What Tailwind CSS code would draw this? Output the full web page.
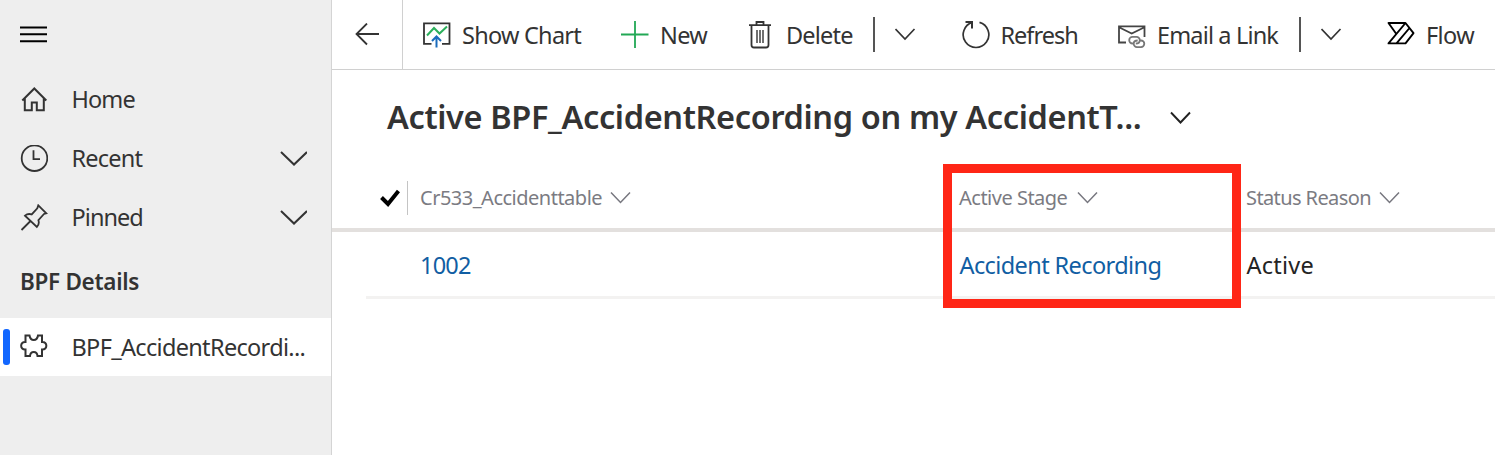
<!DOCTYPE html>
<html lang="en">
<head>
<meta charset="utf-8">
<title>Active BPF_AccidentRecording</title>
<script src="https://cdn.jsdelivr.net/npm/@tailwindcss/browser@4"></script>
</head>
<body class="h-[455px] w-[1495px] overflow-hidden bg-white font-['Noto_Sans',sans-serif] text-[23.5px] text-[#333]">
<div class="flex h-full whitespace-nowrap">

  <!-- Site map -->
  <nav class="flex w-[332px] shrink-0 flex-col border-r border-[#d4d4d4] bg-[#eee]">
    <div class="flex h-[70px] shrink-0 items-center pl-5">
      <svg class="h-[18px] w-7" viewBox="0 0 28 18" stroke="#000" stroke-width="2"><path d="M0 1.500h27M0 8.300h27M0 15.200h27"/></svg>
    </div>
    <div class="flex h-[59px] shrink-0 items-center pl-5">
      <svg class="w-[28px] h-[28px]" viewBox="0 0 28 28" fill="none" stroke="#333" stroke-width="2"><path d="M2.300 14.500 14.300 2.500l12 12M4.800 12.500v11.700h7V16.500h5v7.700h7V12.500"/></svg>
      <span class="ml-[23.500px] tracking-[-0.900px]">Home</span>
    </div>
    <div class="flex h-[59px] shrink-0 items-center pl-5">
      <svg class="w-[28px] h-[28px]" viewBox="0 0 28 28" fill="none" stroke="#333" stroke-width="1.800"><circle cx="14.500" cy="13.200" r="12.800"/><path d="M13.500 5.200v9h6.500"/></svg>
      <span class="ml-[23.500px] w-[207.500px] tracking-[-0.800px]">Recent</span>
      <svg class="h-[15px] w-[28px]" viewBox="0 0 28 15" fill="none" stroke="#333" stroke-width="2"><path d="m2 1 13 12.500 13-12.500"/></svg>
    </div>
    <div class="flex h-[59px] shrink-0 items-center pl-5">
      <svg class="w-[28px] h-[28px]" viewBox="0 0 28 28" fill="none" stroke="#333" stroke-width="1.800"><path d="M1.500 26 10.500 17M18.300 1.300l8 8-2.300.7-5.600 6.200c.8 2.300.3 4.900-1.500 6.700L5 11.700c2-1.800 4.500-2 6.700-1.300l5.600-6z"/></svg>
      <span class="ml-[23.500px] w-[207.500px] tracking-[-0.950px]">Pinned</span>
      <svg class="h-[15px] w-[28px]" viewBox="0 0 28 15" fill="none" stroke="#333" stroke-width="2"><path d="m2 1 13 12.500 13-12.500"/></svg>
    </div>
    <div class="flex h-[70.500px] shrink-0 items-center pl-5 text-[22.500px] font-semibold tracking-[-0.300px]">BPF Details</div>
    <div class="flex h-[58.500px] shrink-0 items-center bg-white pl-[3px]">
      <span class="h-[36px] w-[7px] rounded-[3px] bg-[#1267ff]"></span>
      <svg class="ml-[9px] h-[28px] w-[30px]" viewBox="0 0 30 28" fill="none" stroke="#333" stroke-width="2"><path d="M6.500 2.500H10.500C11.500 8.500 18 8.500 19 2.500H23V9C28.800 8.500 28.800 17 23 16.500V23H18.500C18 17.500 11.500 17.500 11 23H6.500V16.500C.700 17 .700 8.500 6.500 9z"/></svg>
      <span class="ml-[22.500px] mt-[2px] tracking-[-0.670px]">BPF_AccidentRecordi...</span>
    </div>
  </nav>

  <main class="flex grow flex-col">
    <!-- Command bar -->
    <header class="flex h-[70px] shrink-0 items-center border-b border-[#d0d0d0]">
      <div class="flex h-full w-[71px] shrink-0 items-center border-r border-[#d0d0d0] pl-[23px]">
        <svg class="h-[24px] w-[26px]" viewBox="0 0 26 24" fill="none" stroke="#333" stroke-width="1.800"><path d="M24 11H1.500M12 .500 1.500 11 12 21.500"/></svg>
      </div>
      <svg class="ml-5 h-[28px] w-[28px] shrink-0" viewBox="0 0 28 28" fill="none" stroke-width="1.800"><path stroke="#333" d="M8.500 22.900H1V2.300h25.500v20.600h-7.500"/><path stroke="#2bb05c" stroke-width="2" d="m4 14.500 7-7.500 5.500 5.500L24 5.500"/><path stroke="#1a6cbd" stroke-width="2" d="M13.500 26.500V16M9 20l4.500-4.500L18 20"/></svg>
      <span class="ml-[11px] mt-[2px] w-[159px] shrink-0 tracking-[-0.750px]">Show Chart</span>
      <svg class="h-[28px] w-[28px] shrink-0" viewBox="0 0 28 28" stroke="#22a855" stroke-width="1.800"><path d="M0 13.500h27.500M14 0v27"/></svg>
      <span class="ml-[11px] mt-[2px] w-[89px] shrink-0 tracking-[-0.700px]">New</span>
      <svg class="h-[28px] w-[23px] shrink-0" viewBox="0 0 23 28" fill="none" stroke="#333" stroke-width="1.800"><path d="M0 4.200h22M7.500 4V1h7v3M2.500 4.500v19.500q0 2.500 2.500 2.500h12q2.500 0 2.500-2.500V4.500"/><path stroke-width="1.400" d="M8 9v13M11 9v13M14 9v13"/></svg>
      <span class="ml-[14px] mt-[2px] w-[87px] shrink-0 tracking-[-0.800px]">Delete</span>
      <span class="h-[35px] w-[1.500px] shrink-0 bg-[#555]"></span>
      <svg class="ml-[20px] h-[14px] w-[22px] shrink-0" viewBox="0 0 22 14" fill="none" stroke="#333" stroke-width="1.700"><path d="m.5 1 9.500 10 9.500-10"/></svg>
      <svg class="ml-[45.500px] h-[28px] w-[28px] shrink-0" viewBox="0 0 28 28" fill="none" stroke="#333" stroke-width="1.700"><path d="M17.500 1.400A12.800 12.800 0 1 1 10.500 1.400"/><path stroke-width="2" d="M3.500 1h6.500v6.500"/></svg>
      <span class="ml-[10.500px] mt-[2px] w-[117.500px] shrink-0 tracking-[-1px]">Refresh</span>
      <svg class="h-[28px] w-[29px] shrink-0" viewBox="0 0 29 28" fill="none" stroke="#444" stroke-width="1.800"><path d="M8 21.500H1V5.300h25.500V16M1.500 6.500 13.700 12.500l12.300-6"/><path stroke="#777" d="M15 22.500h-.500a3.300 3.300 0 0 1 0-6.600h4a3.300 3.300 0 0 1 3.300 3.300q0 3.300-4 3.300M22.500 19.500h.5a3.300 3.300 0 0 1 0 6.600h-4a3.300 3.300 0 0 1-3.300-3.300q0-3.300 4-3.300"/></svg>
      <span class="ml-[10px] mt-[2px] w-[142px] shrink-0 tracking-[-0.850px]">Email a Link</span>
      <span class="h-[35px] w-[1.500px] shrink-0 bg-[#555]"></span>
      <svg class="ml-[20.500px] h-[14px] w-[22px] shrink-0" viewBox="0 0 22 14" fill="none" stroke="#333" stroke-width="1.700"><path d="m.5 1 9.500 10 9.500-10"/></svg>
      <svg class="ml-[43.500px] h-[28px] w-[29px] shrink-0" viewBox="0 0 29 28" fill="none" stroke="#000" stroke-width="1.900" stroke-linejoin="round"><path d="M9 12.500 1.500 2H18.500L26.500 12.200 18.500 22.400H1.500L18.500 2M9.500 22.400 22.500 7"/></svg>
      <span class="ml-[10.500px] mt-[2px] tracking-[-0.600px]">Flow</span>
    </header>

    <!-- View selector -->
    <div class="flex h-[95px] shrink-0 items-center pl-[55px]">
      <h1 class="w-[783px] text-[32.500px] font-semibold tracking-[-0.360px]">Active BPF_AccidentRecording on my AccidentT...</h1>
      <svg class="h-[14px] w-[22px]" viewBox="0 0 22 14" fill="none" stroke="#222" stroke-width="1.900"><path d="m1 1.500 9.500 10 9.500-10"/></svg>
    </div>

    <!-- Records -->
    <section class="relative">
      <div class="flex h-[67px] items-center border-b-[4px] border-[#e3e0de] pl-[48px] pt-[2px] text-[20px] tracking-[-0.500px] text-[#7b7b82]">
        <svg class="h-[18px] w-[20px]" viewBox="0 0 20 18" fill="none" stroke="#000" stroke-width="4"><path d="m1.500 8.500 6.500 6.500L18.500 2"/></svg>
        <span class="ml-[6.500px] h-[34px] w-[1.500px] bg-[#c4c4c4]"></span>
        <div class="flex w-[538.500px] items-center pl-[12px]">
          <span class="w-[190px]">Cr533_Accidenttable</span>
          <svg class="h-[14px] w-[22px]" viewBox="0 0 22 14" fill="none" stroke="#77777f" stroke-width="1.500"><path d="m1 1.500 9.500 10 9.500-10"/></svg>
        </div>
        <div class="flex w-[287px] items-center pl-[12.500px]">
          <span class="w-[118px]">Active Stage</span>
          <svg class="h-[14px] w-[22px]" viewBox="0 0 22 14" fill="none" stroke="#77777f" stroke-width="1.500"><path d="m1 1.500 9.500 10 9.500-10"/></svg>
        </div>
        <div class="flex items-center pl-[12.500px]">
          <span class="w-[133px] tracking-[-0.600px]">Status Reason</span>
          <svg class="h-[14px] w-[22px]" viewBox="0 0 22 14" fill="none" stroke="#77777f" stroke-width="1.500"><path d="m1 1.500 9.500 10 9.500-10"/></svg>
        </div>
      </div>
      <div class="ml-[34px] flex h-[67px] items-center border-b-[3px] border-[#f3f2f1] pl-[54px] pt-[4px]">
        <span class="w-[539.500px] text-[#115ea3] tracking-[-0.800px]">1002</span>
        <span class="w-[287px] text-[#115ea3] tracking-[-0.600px]">Accident Recording</span>
        <span class="text-[#242424] tracking-[0.250px]">Active</span>
      </div>
      <!-- Highlight around the Active Stage column -->
      <div class="absolute left-[611px] top-[-1px] h-[144px] w-[298px] border-[9px] border-[#ff2616]"></div>
    </section>
  </main>
</div>
</body>
</html>
